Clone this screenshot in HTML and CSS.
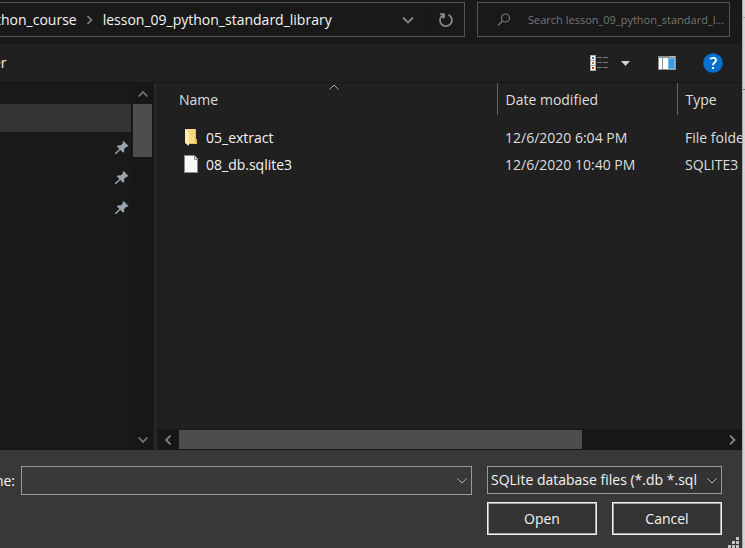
FILE: index.html
```html
<!DOCTYPE html>
<html lang="en">
<head>
<meta charset="utf-8">
<title>Open</title>
<link rel="stylesheet" href="styles.css">
</head>
<body>
<div class="dialog">
  <header class="nav-row">
    <nav class="address" aria-label="Address">
      <a class="crumb" href="#">thon_course</a>
      <svg class="crumb-sep" width="8" height="12" viewBox="0 0 8 12"><path d="M1.500 2 5.500 6 1.500 10" fill="none" stroke="#858585" stroke-width="1.700"/></svg>
      <a class="crumb" href="#">lesson_09_python_standard_library</a>
      <button class="icon-btn history" aria-label="Previous locations"><svg width="12" height="8" viewBox="0 0 12 8"><path d="M1 1.500 6 6.500 11 1.500" fill="none" stroke="#858585" stroke-width="1.800"/></svg></button>
      <button class="icon-btn refresh" aria-label="Refresh"><svg width="16" height="16" viewBox="0 0 16 16"><path d="M10.500 2.800A6 6 0 1 1 5 3V6.500M2 2H6V6" fill="none" stroke="#8a8a8a" stroke-width="1.700"/></svg></button>
    </nav>
    <label class="search">
      <svg width="14" height="14" viewBox="0 0 14 14"><circle cx="8.500" cy="5" r="4" fill="none" stroke="#777" stroke-width="1.200"/><path d="M5.500 8 1 12.500" stroke="#777" stroke-width="1.300"/></svg>
      <input type="search" aria-label="Search" placeholder="Search lesson_09_python_standard_l...">
    </label>
  </header>

  <div class="toolbar">
    <button class="organize">er</button>
    <button class="icon-btn view" aria-label="Change view"><svg width="19" height="16" viewBox="0 0 19 16"><path fill="#aaa" d="M0 0h6v16H0z"/><path fill="#fff" d="M1 1h4v4H1zM1 6h4v4H1zM1 11h4v4H1z"/><path fill="#387d9b" d="M2 2h2v2H2z"/><path fill="#a8823c" d="M2 7h2v2H2z"/><path fill="#cf3418" d="M2 12h2v2H2z"/><path d="M7 2.500h5M13 2.500h5M7 7.500h5M13 7.500h5M7 12.500h5M13 12.500h5" stroke="#777"/></svg></button>
    <button class="icon-btn more" aria-label="More options"><svg width="9" height="5" viewBox="0 0 9 5"><path fill="#d0d0d0" d="M0 0h9L4.500 5z"/></svg></button>
    <button class="icon-btn preview" aria-label="Show the preview pane"><svg width="18" height="14" viewBox="0 0 18 14"><path fill="#929292" d="M0 0h18v14H0z"/><path fill="#fff" d="M1 2h3v11H1zM5 2h5v11H5z"/><path fill="#71b8ed" d="M10 2h7v11h-7z"/><path fill="#3b99df" d="M11 3h5v9h-5z"/><path fill="#ddd" d="M12 0h1v1h-1zM14 0h1v1h-1zM16 0h1v1h-1z"/></svg></button>
    <button class="icon-btn help" aria-label="Help"><svg width="20" height="20" viewBox="0 0 20 20"><circle cx="10" cy="10" r="9.800" fill="#0870cf"/><path d="M7 6.200C8.600 4.300 13 4.300 13 7.300 13 9.600 10 9.600 10 12.300" fill="none" stroke="#fff" stroke-width="1.900"/><path fill="#fff" d="M9 14h2v2H9z"/></svg></button>
  </div>

  <main class="content">
    <aside class="sidebar">
      <ul class="places">
        <li class="place selected"></li>
        <li class="place"><svg width="14" height="14" viewBox="0 0 14 14"><path fill="#98a3ad" d="M8.500 0 13.500 5 12 6 11.300 5.800 9 8.200 9.300 10.500 8.200 11.700 5.300 8.900 1.200 13H0V12L4.400 7.900 1.800 5.300 3 4.200 5.500 4.500 8 2.200 7.600 1z"/></svg></li>
        <li class="place"><svg width="14" height="14" viewBox="0 0 14 14"><path fill="#98a3ad" d="M8.500 0 13.500 5 12 6 11.300 5.800 9 8.200 9.300 10.500 8.200 11.700 5.300 8.900 1.200 13H0V12L4.400 7.900 1.800 5.300 3 4.200 5.500 4.500 8 2.200 7.600 1z"/></svg></li>
        <li class="place"><svg width="14" height="14" viewBox="0 0 14 14"><path fill="#98a3ad" d="M8.500 0 13.500 5 12 6 11.300 5.800 9 8.200 9.300 10.500 8.200 11.700 5.300 8.900 1.200 13H0V12L4.400 7.900 1.800 5.300 3 4.200 5.500 4.500 8 2.200 7.600 1z"/></svg></li>
      </ul>
      <div class="vscroll">
        <button class="icon-btn scroll-end" aria-label="Scroll up"><svg width="10" height="8" viewBox="0 0 10 8"><path d="M.7 6.500 5 2 9.300 6.500" fill="none" stroke="#777" stroke-width="1.800"/></svg></button>
        <div class="vthumb"></div>
        <button class="icon-btn scroll-end" aria-label="Scroll down"><svg width="10" height="8" viewBox="0 0 10 8"><path d="M.7 1.500 5 6 9.300 1.500" fill="none" stroke="#777" stroke-width="1.800"/></svg></button>
      </div>
    </aside>
    <section class="files">
      <div class="list">
        <table>
          <colgroup><col class="col-name"><col class="col-date"><col class="col-type"></colgroup>
          <thead>
            <tr>
              <th class="name-head">Name<svg class="sort" width="10" height="6" viewBox="0 0 10 6"><path d="M.5 5.500 5 1 9.500 5.500" fill="none" stroke="#aaa"/></svg></th>
              <th>Date modified</th><th>Type</th>
            </tr>
          </thead>
          <tbody>
            <tr>
              <td><div class="file"><svg width="16" height="20" viewBox="0 0 16 20"><path fill="#e7bf58" d="M5 1h8v14H5z"/><path fill="#f6d982" d="M2 1h10v14H2z"/><path fill="#ffebaa" d="M2 1 6 4V18L2 15z"/><path fill="#e8bd52" d="M12 11h2v5H6v-1h6z"/></svg>05_extract</div></td>
              <td>12/6/2020 6:04 PM</td><td>File folder</td>
            </tr>
            <tr>
              <td><div class="file"><svg width="16" height="20" viewBox="0 0 16 20"><path fill="#f7f7f7" stroke="#8c8c8c" d="M1.500 .5H11.500L14.500 4V17.500H1.500z"/><path fill="#ddd" stroke="#8c8c8c" d="M11.500 .5V4.500H14.500"/></svg>08_db.sqlite3</div></td>
              <td>12/6/2020 10:40 PM</td><td>SQLITE3</td>
            </tr>
          </tbody>
        </table>
      </div>
      <div class="hscroll">
        <button class="icon-btn scroll-end" aria-label="Scroll left"><svg width="8" height="10" viewBox="0 0 8 10"><path d="M6.500 .7 2 5 6.500 9.300" fill="none" stroke="#858585" stroke-width="1.800"/></svg></button>
        <div class="htrack"><div class="hthumb"></div></div>
        <button class="icon-btn scroll-end" aria-label="Scroll right"><svg width="8" height="10" viewBox="0 0 8 10"><path d="M1 .7 5.500 5 1 9.300" fill="none" stroke="#858585" stroke-width="1.800"/></svg></button>
      </div>
    </section>
  </main>

  <footer class="footer">
    <label class="name-label" for="filename">ne:</label>
    <div class="combo">
      <input id="filename" type="text">
      <svg class="chevron" width="10" height="6" viewBox="0 0 10 6"><path d="M.5 .5 5 5 9.500 .5" fill="none" stroke="#bbb"/></svg>
    </div>
    <div class="actions">
      <div class="combo filter">
        <select aria-label="File type"><option>SQLite database files (*.db *.sql</option></select>
        <svg class="chevron" width="10" height="6" viewBox="0 0 10 6"><path d="M.5 .5 5 5 9.500 .5" fill="none" stroke="#bbb"/></svg>
      </div>
      <div class="buttons"><button class="push">Open</button><button class="push">Cancel</button></div>
    </div>
    <svg class="grip" width="11" height="11" viewBox="0 0 11 11"><path fill="#c4c4c4" d="M8 0h3v3H8zM4 4h3v3H4zM8 4h3v3H8zM0 8h3v3H0zM4 8h3v3H4zM8 8h3v3H8z"/></svg>
  </footer>
</div>
<div class="backdrop"></div>
</body>
</html>
```

FILE: styles.css
```css
* { box-sizing: border-box; }

body {
  margin: 0;
  min-height: 100vh;
  display: grid;
  grid-template-columns: minmax(0, 1fr) 3px;
  background: #202020;
  color: #f4f4f4;
  font: 14px/20px "Open Sans", "Noto Sans", sans-serif;
}

button, input, select { font: inherit; color: inherit; margin: 0; }
svg { display: block; flex: none; }

.dialog {
  display: flex;
  flex-direction: column;
  min-width: 0;
  overflow: hidden;
}

.backdrop {
  background: linear-gradient(#999, #999) 0 17px / 100% 1px no-repeat,
    linear-gradient(#777, #777) 0 89px / 100% 1px no-repeat, #d3d3d3;
  border-left: 1px solid #aaa;
}

.icon-btn {
  display: flex;
  align-items: center;
  justify-content: center;
  padding: 0;
  border: 0;
  background: none;
}

.nav-row {
  display: flex;
  gap: 12px;
  height: 44px;
  padding: 2px 12px 7px 0;
  background: #191919;
}

.address {
  flex: 1;
  display: flex;
  align-items: center;
  min-width: 0;
  border: 1px solid #535353;
  border-left: 0;
}

.crumb { color: inherit; text-decoration: none; }
.crumb:first-child { margin-left: -4px; }
.crumb-sep { margin: 0 9px; }
.history { width: 36px; height: 100%; margin-left: auto; }
.refresh { width: 38px; height: 100%; border-left: 1px solid #151515; }

.search {
  display: flex;
  align-items: center;
  gap: 17px;
  width: 253px;
  padding-left: 19px;
  border: 1px solid #535353;
}

.search input {
  flex: 1;
  min-width: 0;
  padding: 0;
  border: 0;
  outline: 0;
  background: none;
  font-size: 11px;
  appearance: none;
}

.search input::-webkit-search-cancel-button { display: none; }
.search input::placeholder { color: #777; opacity: 1; }

.toolbar {
  display: flex;
  align-items: center;
  height: 39px;
  padding-right: 19px;
  border-bottom: 1px solid #171717;
}

.organize { margin-right: auto; padding: 0; border: 0; background: none; margin-left: -7px; }
.more { margin-left: 12px; }
.preview { margin-left: 28px; }
.help { margin-left: 27px; }

.content { flex: 1; display: flex; min-height: 0; }

.sidebar {
  display: flex;
  width: 156px;
  background: #191919;
  border-right: 2px solid #292929;
}

.places { flex: 1; margin: 0; padding: 21px 0 0; list-style: none; }
.place {
  display: flex;
  align-items: center;
  justify-content: flex-end;
  height: 30px;
  padding-right: 2px;
}
.place.selected { height: 28px; margin-bottom: 1px; background: #333; }

.vscroll {
  display: flex;
  flex-direction: column;
  width: 23px;
  padding: 0 2px;
  background: #171717;
}
.scroll-end { flex: none; width: 19px; height: 21px; }
.vthumb { height: 53px; margin-bottom: auto; background: #4d4d4d; }

.files { flex: 1; display: flex; flex-direction: column; min-width: 0; }
.list { flex: 1; overflow: hidden; }

table { width: 100%; table-layout: fixed; border-collapse: collapse; white-space: nowrap; }
.col-name { width: 341px; }
.col-date { width: 180px; }
th, td { padding: 0 0 0 8px; text-align: left; font-weight: 400; color: #dedede; overflow: hidden; }
th { height: 32px; padding-top: 2px; border-right: 1px solid #636363; }
th:last-child { border-right: 0; }
td { height: 27px; }
tbody::before { content: ""; display: block; height: 9px; }
.name-head { position: relative; padding-left: 23px; }
.sort { position: absolute; top: 1px; left: 50%; margin-left: 3px; }
.file { display: flex; align-items: center; gap: 7px; padding-left: 19px; color: #f4f4f4; }

.hscroll { display: flex; height: 21px; margin-left: 2px; background: #171717; }
.htrack { flex: 1; padding: 1px 0; border-left: 1px solid #171717; }
.hthumb { width: 74%; height: 100%; margin-left: 1px; background: #4d4d4d; }

.footer {
  position: relative;
  display: flex;
  gap: 6px;
  height: 98px;
  padding: 16px 20px 13px 0;
  background: #383838;
}

.name-label { display: flex; justify-content: flex-end; width: 15px; height: 29px; align-items: center; }

.combo { position: relative; flex: 1; height: 29px; }
.combo input, .combo select {
  display: block;
  width: 100%;
  height: 100%;
  padding: 0 22px 0 3px;
  border: 1px solid #999;
  border-radius: 0;
  outline: 0;
  background: #383838;
  appearance: none;
}
.combo select { background: #333; }
.chevron { position: absolute; right: 5px; top: 12px; }

.actions { width: 235px; margin-left: 9px; }
.filter { height: 28px; }
.buttons { display: grid; grid-template-columns: 1fr 1fr; gap: 15px; margin-top: 8px; }
.push {
  height: 33px;
  padding: 0;
  border: 1px solid #f0f0f0;
  background: #333;
  box-shadow: inset 0 0 0 1px #a5a5a5;
}

.grip { position: absolute; right: 3px; bottom: 0; }
```
